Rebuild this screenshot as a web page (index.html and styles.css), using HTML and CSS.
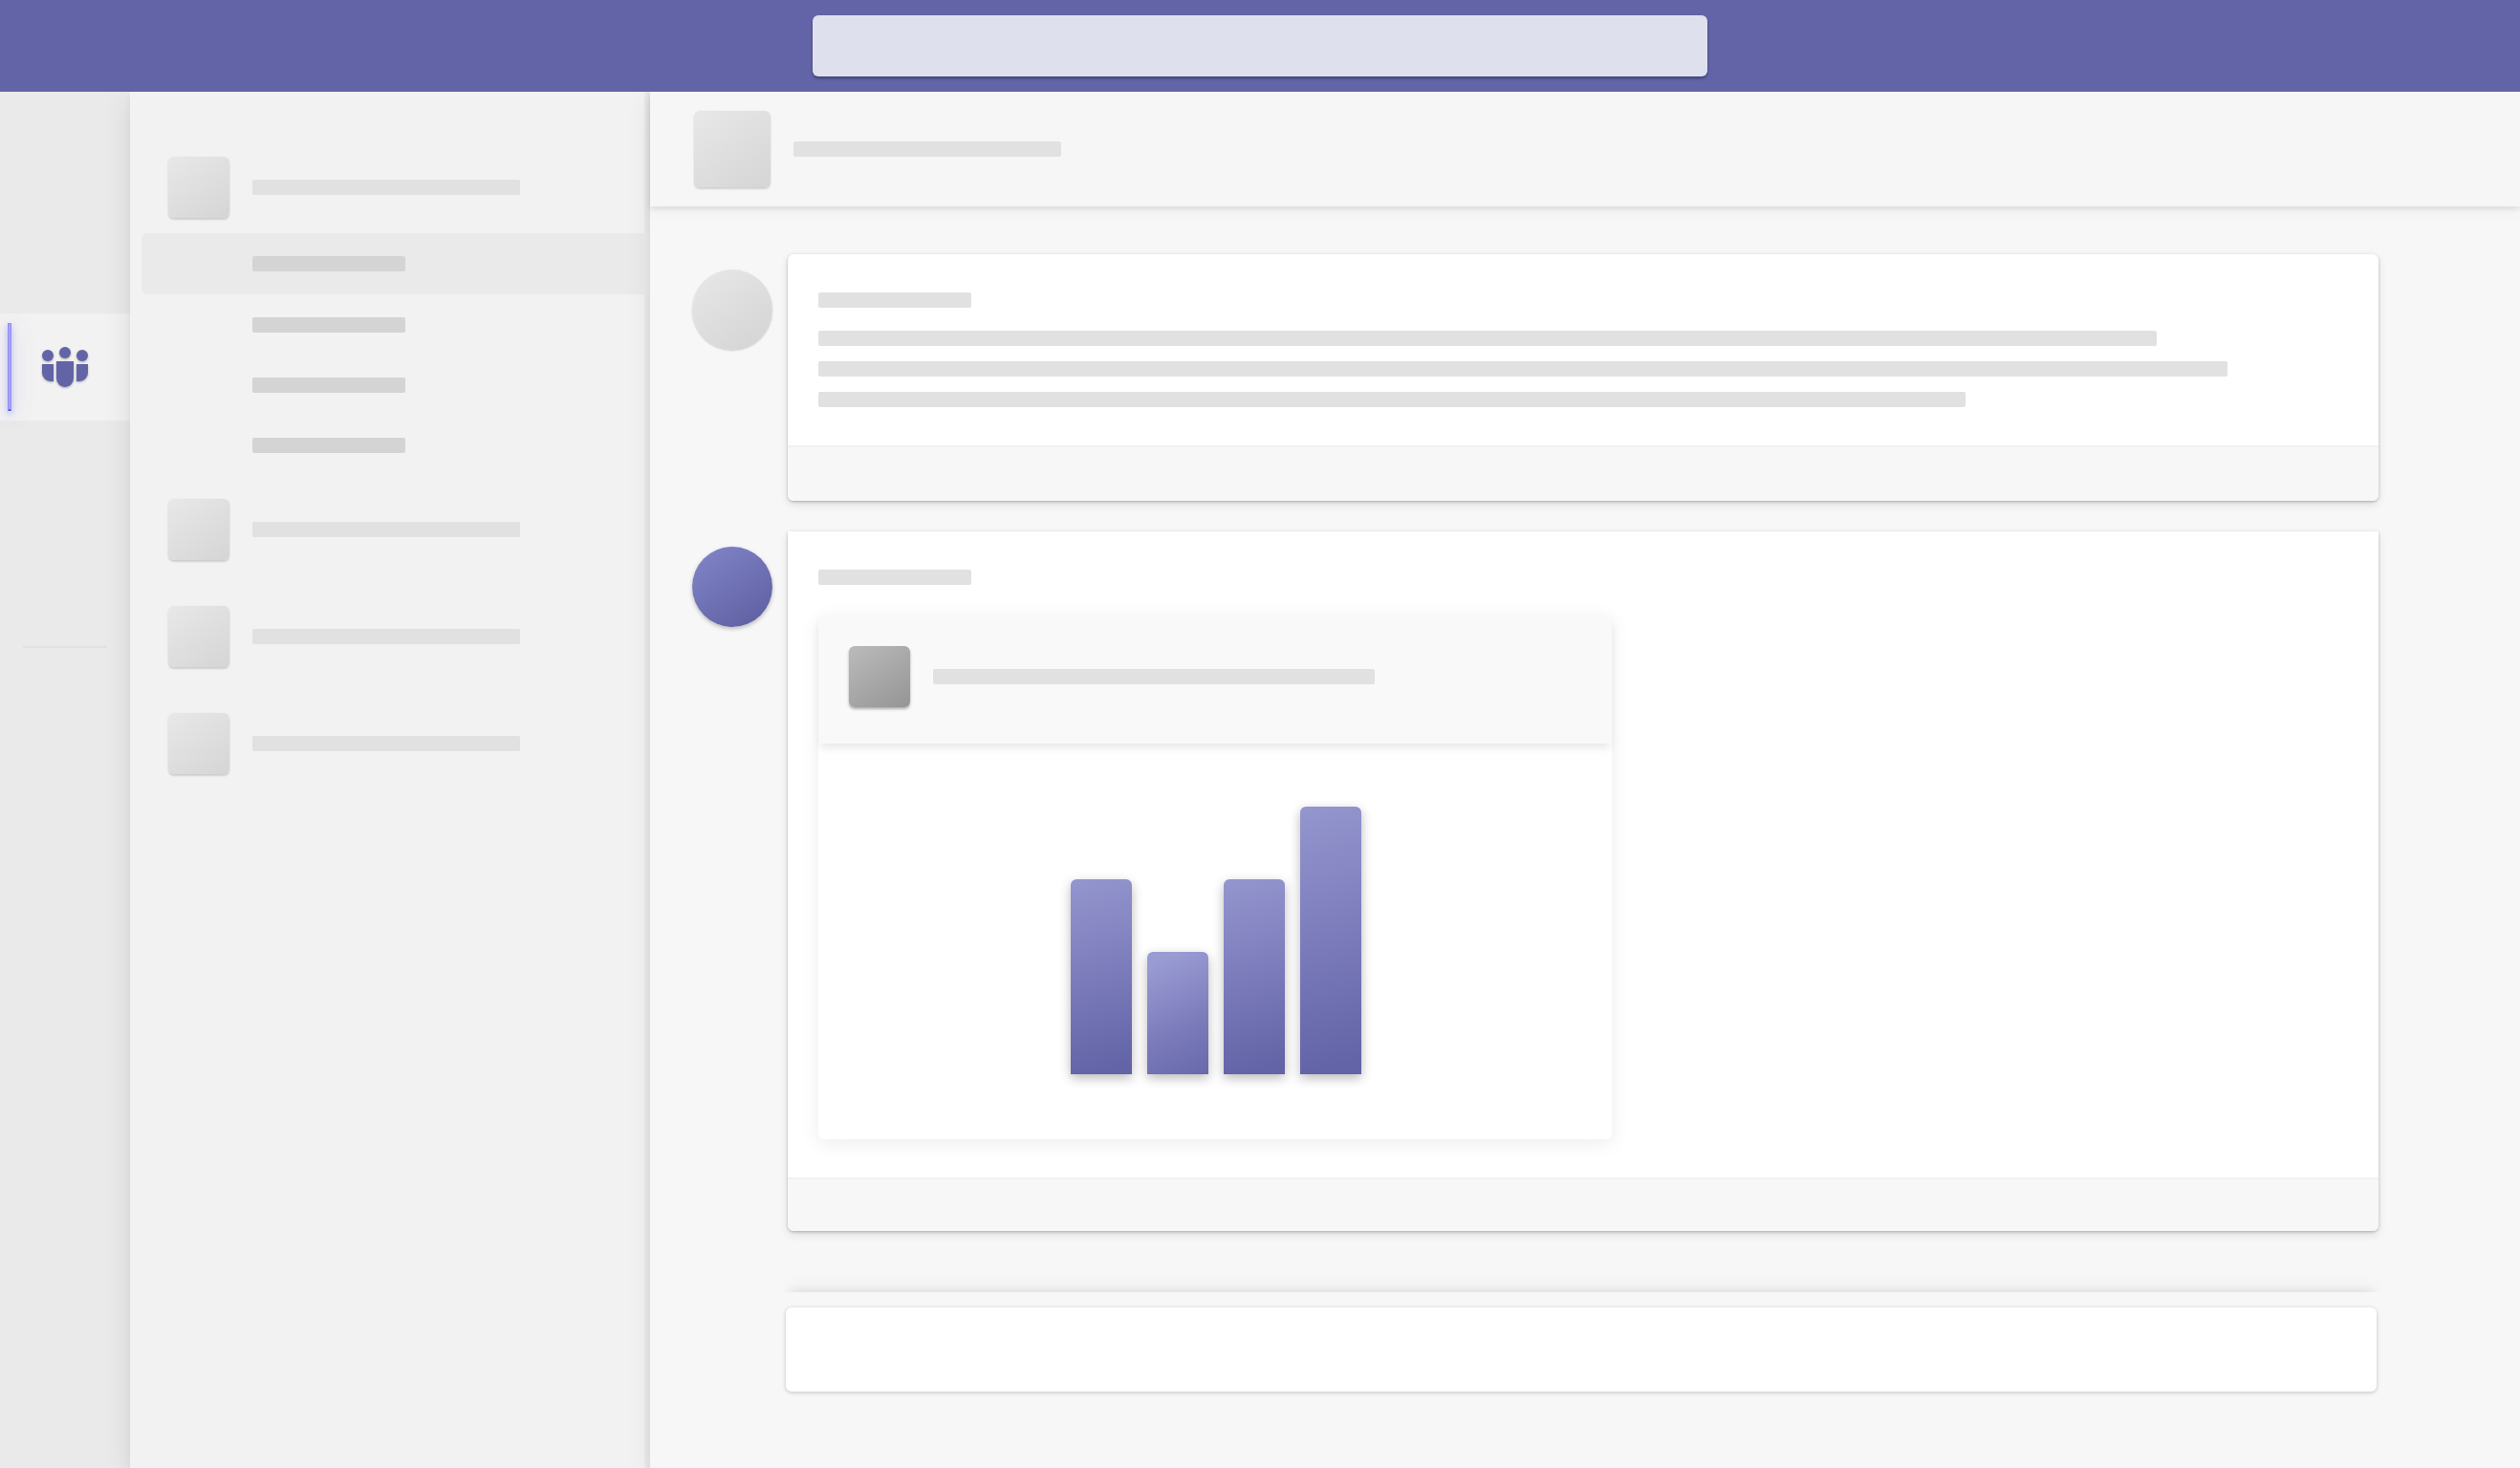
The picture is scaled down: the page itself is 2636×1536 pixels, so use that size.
FILE: index.html
```html
<!DOCTYPE html>
<html lang="en">
<head>
<meta charset="utf-8">
<meta name="viewport" content="width=device-width, initial-scale=1">
<link rel="stylesheet" href="styles.css">
</head>
<body>
<div class="app">
  <header class="topbar"><input class="search" type="search" aria-label="Search"></header>
  <div class="body">
    <nav class="rail">
      <button class="rail-item" type="button" aria-label="Teams">
        <span class="rail-mark"></span>
        <svg class="teams-icon" viewBox="0 0 48 42" aria-hidden="true">
          <circle cx="6" cy="9" r="6"/><circle cx="24" cy="6" r="6"/><circle cx="42" cy="9" r="6"/>
          <path d="M0 18h12v18H9a9 9 0 0 1-9-9z"/>
          <path d="M15 15h18v18a9 9 0 0 1-18 0z"/>
          <path d="M36 18h12v9a9 9 0 0 1-9 9h-3z"/>
        </svg>
      </button>
      <hr class="rail-divider">
    </nav>
    <aside class="sidebar">
      <div class="team team-open"><span class="tile"></span><span class="line"></span></div>
      <ul class="channels">
        <li class="channel selected"><span class="line"></span></li>
        <li class="channel"><span class="line"></span></li>
        <li class="channel"><span class="line"></span></li>
        <li class="channel"><span class="line"></span></li>
      </ul>
      <div class="team"><span class="tile"></span><span class="line"></span></div>
      <div class="team"><span class="tile"></span><span class="line"></span></div>
      <div class="team"><span class="tile"></span><span class="line"></span></div>
    </aside>
    <main class="main">
      <div class="main-head"><span class="tile tile-large"></span><span class="line"></span></div>
      <div class="feed">
        <article class="post">
          <span class="avatar"></span>
          <div class="card card-round">
            <div class="card-body">
              <span class="line line-name"></span>
              <div class="text">
                <span class="line" style="width:87.5%"></span>
                <span class="line" style="width:92.1%"></span>
                <span class="line" style="width:75%"></span>
              </div>
            </div>
            <div class="card-foot"></div>
          </div>
        </article>
        <article class="post">
          <span class="avatar avatar-brand"></span>
          <div class="card">
            <div class="card-body">
              <span class="line line-name"></span>
              <div class="attachment">
                <div class="attachment-head"><span class="tile tile-dark"></span><span class="line"></span></div>
                <div class="chart">
                  <span class="bar" style="height:204px"></span>
                  <span class="bar bar-low" style="height:128px"></span>
                  <span class="bar" style="height:204px"></span>
                  <span class="bar" style="height:280px"></span>
                </div>
              </div>
            </div>
            <div class="card-foot"></div>
          </div>
        </article>
      </div>
      <div class="compose"><input class="compose-box" type="text" aria-label="New message"></div>
    </main>
  </div>
</div>
</body>
</html>
```
FILE: styles.css
```css
* { box-sizing: border-box; }
body { margin: 0; font-family: "Open Sans", sans-serif; background: #f7f7f7; }
.app { min-height: 100vh; display: flex; flex-direction: column; }

.topbar { height: 96px; display: flex; align-items: center; justify-content: center; background: #6264a7; position: relative; z-index: 4; }
.search { width: 936px; max-width: 90%; height: 64px; border: 0; border-radius: 6px; background: #dee0ed; padding: 0 24px; font: 24px "Open Sans", sans-serif; box-shadow: 0 2px 3px rgba(30, 30, 70, .5); }

.body { flex: 1; display: flex; }

.line { display: block; width: 280px; height: 16px; border-radius: 2px; background: #e1e1e1; }
.tile { flex: none; width: 64px; height: 64px; border-radius: 6px; background: linear-gradient(145deg, #e8e8e8, #d5d5d5); box-shadow: 0 2px 2px rgba(0, 0, 0, .14), 0 0 2px rgba(0, 0, 0, .06); }
.tile-large { width: 80px; height: 80px; }
.tile-dark { background: linear-gradient(145deg, #bbb, #959595); box-shadow: 0 2px 3px rgba(0, 0, 0, .3); }

.rail { width: 136px; flex: none; padding-top: 232px; background: #eaeaea; }
.rail-item { display: flex; align-items: center; width: 100%; height: 112px; padding: 0 44px 0 8px; border: 0; background: #f2f2f2; justify-content: space-between; }
.rail-mark { width: 4px; height: 92px; background: #a9a2f8; border: 1px solid #938ef0; border-bottom: 2px solid #6c67d8; box-shadow: 0 3px 6px rgba(100, 90, 240, .4), 0 4px 24px rgba(100, 90, 240, .3); }
.teams-icon { width: 48px; height: 42px; fill: #6264a7; filter: drop-shadow(0 1px 1px rgba(0, 0, 0, .3)); }
.rail-divider { margin: 236px 24px 0; border: 0; height: 2px; background: #e1e1e1; }

.sidebar { width: 544px; flex: none; padding-top: 44px; position: relative; z-index: 1; background: linear-gradient(to left, #e9e9e9 6px, #f2f2f2 6px); box-shadow: 0 4px 6px rgba(0, 0, 0, .04), 0 8px 28px rgba(0, 0, 0, .1); }
.team { display: flex; align-items: center; gap: 24px; padding: 24px 40px; }
.team-open { padding-bottom: 16px; }
.channels { list-style: none; margin: 0 0 1px; padding: 0 0 0 12px; }
.channel { height: 63px; padding-left: 116px; display: flex; align-items: center; }
.channel .line { width: 160px; background: #d4d4d4; }
.selected { height: 64px; background: #eaeaea; border-radius: 6px 0 0 6px; }

.main { flex: 1; min-width: 0; display: flex; flex-direction: column; position: relative; z-index: 2; background: #f7f7f7; box-shadow: 0 4px 6px rgba(0, 0, 0, .04), 0 8px 28px rgba(0, 0, 0, .07); }
.main-head { display: flex; align-items: center; gap: 24px; height: 120px; padding: 0 46px; background: #f6f6f6; box-shadow: 0 2px 6px rgba(0, 0, 0, .1), 0 6px 14px rgba(0, 0, 0, .04); }
.feed { padding: 50px 148px 64px 44px; display: flex; flex-direction: column; gap: 32px; }
.post { display: flex; align-items: flex-start; gap: 16px; }
.avatar { flex: none; width: 84px; height: 84px; margin-top: 16px; border-radius: 50%; background: linear-gradient(145deg, #e8e8e8, #d3d3d3); box-shadow: 0 1px 2px rgba(0, 0, 0, .2); }
.avatar-brand { background: linear-gradient(145deg, #8286c8, #5c5da0); box-shadow: 0 2px 4px rgba(0, 0, 0, .25); }
.card { flex: 1; min-width: 0; background: #fff; border-radius: 0 0 6px 6px; box-shadow: 0 1px 3px rgba(0, 0, 0, .25), 0 4px 10px rgba(0, 0, 0, .1); }
.card-round { border-radius: 6px; }
.card-body { padding: 40px 32px; }
.line-name { width: 160px; }
.text { margin-top: 24px; display: flex; flex-direction: column; gap: 16px; }
.card-foot { height: 56px; border-top: 2px solid #f1f1f1; background: #f7f7f7; border-radius: 0 0 6px 6px; }
.card-round .card-foot { height: 58px; }

.attachment { width: 830px; max-width: 100%; margin-top: 32px; border-radius: 6px; box-shadow: 0 4px 20px rgba(0, 0, 0, .08); }
.attachment-head { height: 134px; padding: 32px; display: flex; gap: 24px; background: #f9f9f9; border-radius: 6px 6px 0 0; box-shadow: 0 6px 10px -2px rgba(0, 0, 0, .1); }
.attachment-head .line { width: 462px; margin-top: 24px; }
.chart { display: flex; align-items: flex-end; justify-content: center; gap: 16px; height: 414px; padding: 0 0 68px 2px; border-radius: 0 0 6px 6px; }
.bar { width: 64px; border-radius: 6px 6px 0 0; background: linear-gradient(165deg, #9496ce, #7b7bbb 50%, #6264a7 95%); box-shadow: 0 4px 12px rgba(0, 0, 0, .28); }
.bar-low { background: linear-gradient(155deg, #999bd3 10%, #7b7bbb 62%, #6264a7 110%); }

.compose { padding: 16px 150px 80px 142px; }
/* only the part of the shadow above the compose area shows */
.compose::before { content: ""; display: block; height: 16px; margin: -16px 4px 0; box-shadow: 0 -2px 10px rgba(0, 0, 0, .08), 0 -2px 24px rgba(0, 0, 0, .06); clip-path: inset(-40px -40px 100% -40px); }
.compose-box { display: block; width: 100%; height: 88px; border: 0; border-radius: 6px; padding: 0 24px; font: 24px "Open Sans", sans-serif; background: #fff; box-shadow: 0 1px 4px rgba(0, 0, 0, .22); }
```
